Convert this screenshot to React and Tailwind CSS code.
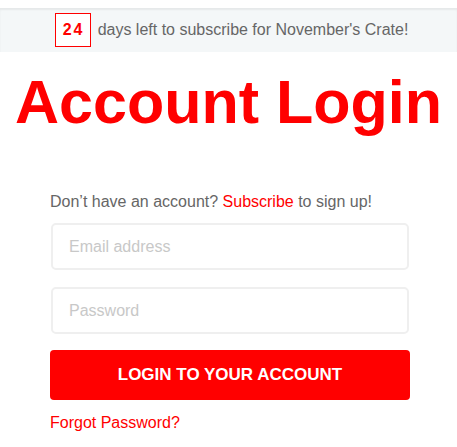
import React from "react";

export default function App() {
    return (
        <div className="w-[457px] h-[447px] bg-white overflow-hidden" style={{ fontFamily: '"Liberation Sans", Arial, sans-serif' }}>
            {/* countdown banner */}
            <div className="h-[8px] bg-white" />
            <div className="h-[44px] bg-[#f4f7f8] shadow-[inset_0_2px_2px_rgba(0,0,0,0.06)] flex items-center justify-center gap-[7px] pl-[6px]">
                <div className="w-[36px] h-[34px] border border-[#ff0000] bg-white flex items-center justify-center text-[16px] font-bold text-[#ff0000] tracking-[2px] pl-[2px]">
                    24
                </div>
                <span className="text-[16px] text-[#666666]">days left to subscribe for November's Crate!</span>
            </div>

            <h1 className="text-center text-[61px] leading-none font-bold text-[#ff0000] mt-[20px]">Account Login</h1>

            <div className="ml-[50px] w-[360px] mt-[60px]">
                <p className="text-[16px] text-[#666666] leading-[18px]">
                    Don’t have an account? <a className="text-[#ff0000]">Subscribe</a> to sign up!
                </p>
                <input
                    placeholder="Email address"
                    className="mt-[12px] ml-px block w-[358px] h-[47px] border-2 border-[#efefef] rounded-[5px] px-[16px] text-[16px] text-[#555] placeholder:text-[#c8c8c8] outline-none"
                />
                <input
                    type="password"
                    placeholder="Password"
                    className="mt-[17px] ml-px block w-[358px] h-[47px] border-2 border-[#efefef] rounded-[5px] px-[16px] text-[16px] text-[#555] placeholder:text-[#c8c8c8] outline-none"
                />
                <button className="mt-[16px] w-[360px] h-[50px] bg-[#ff0000] rounded-[4px] text-white font-bold text-[17px]">
                    LOGIN TO YOUR ACCOUNT
                </button>
                <a className="block mt-[14px] text-[16px] text-[#ff0000] leading-[18px]">Forgot Password?</a>
            </div>
        </div>
    );
}
